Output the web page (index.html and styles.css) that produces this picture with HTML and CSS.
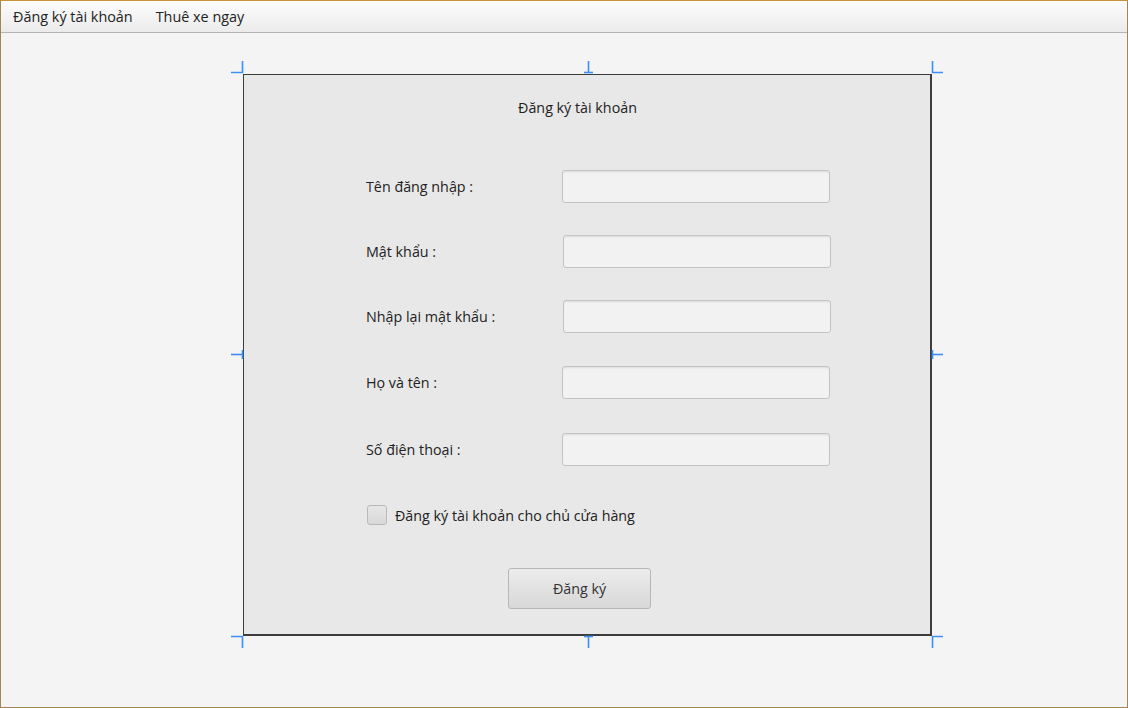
FILE: index.html
```html
<!DOCTYPE html>
<html lang="vi">
<head>
<meta charset="utf-8">
<title>Đăng ký tài khoản</title>
<link rel="stylesheet" href="styles.css">
</head>
<body>
<div class="window">
  <nav class="menubar">
    <span class="menu-item">Đăng ký tài khoản</span>
    <span class="menu-item">Thuê xe ngay</span>
  </nav>
  <main class="canvas">
    <section class="panel">
      <h1 class="panel-title">Đăng ký tài khoản</h1>
      <div class="form">
        <div class="row">
          <label class="label">Tên đăng nhập :</label>
          <div class="input"></div>
        </div>
        <div class="row">
          <label class="label">Mật khẩu :</label>
          <div class="input shift"></div>
        </div>
        <div class="row">
          <label class="label">Nhập lại mật khẩu :</label>
          <div class="input shift"></div>
        </div>
        <div class="row row-b">
          <label class="label">Họ và tên :</label>
          <div class="input"></div>
        </div>
        <div class="row row-c">
          <label class="label">Số điện thoại :</label>
          <div class="input"></div>
        </div>
        <div class="check-row">
          <span class="checkbox"></span>
          <span class="check-label">Đăng ký tài khoản cho chủ cửa hàng</span>
        </div>
        <div class="actions">
          <button class="btn" type="button">Đăng ký</button>
        </div>
      </div>
    </section>
  </main>
  <svg class="handles" width="1128" height="708" viewBox="0 0 1128 708" aria-hidden="true">
    <g fill="none" stroke="#3d8ef5" stroke-width="1.6">
      <path d="M231 72.5H242.5V61"/>
      <path d="M943 72.5H932.5V61"/>
      <path d="M231 636.5H242.5V648"/>
      <path d="M943 636.5H932.5V648"/>
      <path d="M588.5 61V72"/>
      <path d="M584 72.5H593"/>
      <path d="M588.5 648V637"/>
      <path d="M584 636.5H593"/>
      <path d="M231 354.5H242"/>
      <path d="M242.5 350V359"/>
      <path d="M943 354.5H933"/>
      <path d="M932.5 350V359"/>
    </g>
  </svg>
</div>
</body>
</html>
```
FILE: styles.css
```css
* { box-sizing: border-box; }
html, body { margin: 0; padding: 0; }
body {
  font-family: "Open Sans", "Noto Sans", "DejaVu Sans", sans-serif;
  color: #222;
}
.window {
  position: relative;
  width: 1128px;
  height: 708px;
  border: 1px solid #a6844e;
  border-top-color: #c79538;
  display: flex;
  flex-direction: column;
  background: #f4f4f4;
  overflow: hidden;
}
.menubar {
  height: 32px;
  flex: none;
  display: flex;
  align-items: center;
  gap: 23px;
  padding-left: 12px;
  background: linear-gradient(#fcfcfc, #ebebeb);
  border-bottom: 1px solid #b3b3b3;
  font-size: 14.4px;
}
.menu-item { color: #222; }
.canvas {
  flex: 1;
  padding-top: 41px;
  padding-left: 242px;
}
.panel {
  width: 689px;
  height: 562px;
  background: #e8e8e8;
  border: 1px solid #3c3c3c;
  border-right-width: 2px;
  border-bottom-width: 2px;
  padding-top: 23px;
}
.panel-title {
  margin: 0;
  text-align: center;
  font-size: 14.3px;
  font-weight: normal;
  line-height: 20px;
  padding-right: 19px;
  color: #222;
}
.form {
  margin-top: 52px;
  padding-left: 122px;
  display: flex;
  flex-direction: column;
  gap: 33px;
}
.row {
  display: flex;
  align-items: center;
  height: 32px;
}
.row-b { margin-top: 1px; }
.row-c { margin-top: 2px; }
.label {
  width: 196px;
  font-size: 14.3px;
  color: #222;
}
.input {
  width: 268px;
  height: 33px;
  background: #f2f2f2;
  border: 1px solid #c3c3c3;
  border-radius: 3px;
  box-shadow: inset 0 2px 2px -1px #dcdcdc;
}
.input.shift { margin-left: 1px; }
.check-row {
  margin-top: 7px;
  display: flex;
  align-items: center;
  gap: 8px;
  padding-left: 1px;
}
.checkbox {
  width: 20px;
  height: 20px;
  border: 1px solid #b9b9b9;
  border-radius: 3px;
  background: linear-gradient(#e6e6e6, #d9d9d9);
}
.check-label {
  font-size: 14.3px;
  color: #222;
}
.actions {
  margin-top: 10px;
  padding-left: 142px;
}
.btn {
  width: 143px;
  height: 41px;
  border: 1px solid #b7b7b7;
  border-radius: 3px;
  background: linear-gradient(#ececec, #d8d8d8);
  font-family: inherit;
  font-size: 14.3px;
  color: #333;
  padding: 0 0 0 0;
}
.handles {
  position: absolute;
  left: -1px;
  top: -1px;
  pointer-events: none;
}
```
